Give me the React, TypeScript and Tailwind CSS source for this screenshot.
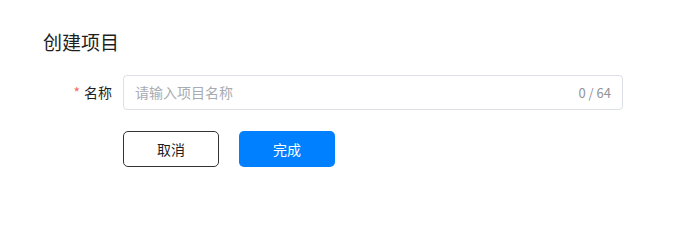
const App = () => {
  return (
    <div
      className="w-[687px] h-[202px] bg-white pl-[43px] pt-[30px]"
      style={{ fontFamily: '"Noto Sans CJK SC", "Noto Sans", sans-serif' }}
    >
      <h2 className="text-[19px] leading-[24px] text-[#1f1f1f]">创建项目</h2>

      <div className="mt-[21px] flex items-center">
        <label className="w-[80px] pr-[11px] flex justify-end items-center text-[14px] text-[#1f1f1f]">
          <span className="text-[#f56c6c] mr-[4px]">*</span>
          名称
        </label>
        <div className="w-[500px] h-[35px] border border-[#dcdfe6] rounded-[4px] flex items-center justify-between pl-[11px] pr-[11px]">
          <input
            className="flex-1 outline-none text-[14px] text-[#333] placeholder:text-[#a8abb2] bg-transparent"
            placeholder="请输入项目名称"
          />
          <span className="text-[13px] text-[#909399]">0 / 64</span>
        </div>
      </div>

      <div className="mt-[21px] ml-[80px] flex gap-[20px]">
        <button className="w-[96px] h-[36px] border border-[#333] rounded-[5px] text-[14px] text-[#1f1f1f] bg-white">
          取消
        </button>
        <button className="w-[96px] h-[36px] rounded-[5px] text-[14px] text-white bg-[#0080ff]">
          完成
        </button>
      </div>
    </div>
  );
};

export default App;
